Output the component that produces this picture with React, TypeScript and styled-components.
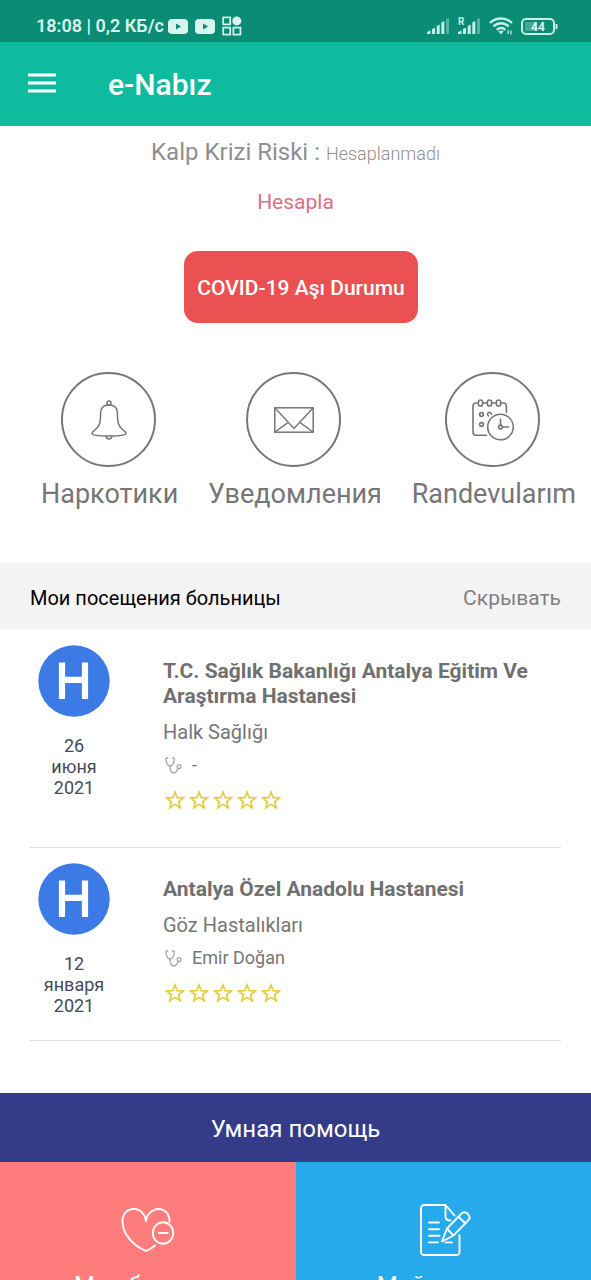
import React from "react";
import styled, { createGlobalStyle } from "styled-components";

const GlobalStyle = createGlobalStyle`
  *, *::before, *::after { box-sizing: border-box; }
  body { margin: 0; background: #ffffff; font-family: Roboto, "Noto Sans", sans-serif; }
  button { font: inherit; border: 0; padding: 0; background: none; cursor: pointer; }
  h1, h2, h3, p, ul { margin: 0; padding: 0; }
  ul { list-style: none; }
  a { color: inherit; text-decoration: none; }
  svg { display: block; flex: none; }
`;

const Screen = styled.div`
  display: flex;
  flex-direction: column;
  height: 100vh;
  overflow: hidden;
`;

const StatusBar = styled.div`
  display: flex;
  align-items: center;
  justify-content: space-between;
  flex: none;
  height: 42px;
  padding: 10px 33px 0 36px;
  background: #0a8d74;
  color: #d9f5ee;
  font-size: 18px;
  font-weight: 600;
  line-height: 32px;
`;

const StatusGroup = styled.div<{ $gap: number }>`
  display: flex;
  align-items: center;
  gap: ${(p) => p.$gap}px;
`;

const AppBar = styled.header`
  display: flex;
  align-items: center;
  flex: none;
  gap: 52px;
  height: 84px;
  padding: 2px 28px 0;
  background: #0fbb9e;
  color: #ffffff;
`;

const MenuButton = styled.button`
  color: #ffffff;
  padding-bottom: 4px;
`;

const AppTitle = styled.h1`
  font-size: 30px;
  font-weight: 500;
  line-height: 36px;
`;

const Content = styled.main`
  flex: 1;
  min-height: 0;
  overflow-y: auto;
  scrollbar-width: none;
`;

const RiskPanel = styled.section`
  display: flex;
  flex-direction: column;
  align-items: center;
  padding-top: 8px;
`;

const RiskLine = styled.p`
  color: #8f8f8f;
  font-size: 24px;
  line-height: 36px;
`;

const RiskValue = styled.span`
  font-size: 18px;
  font-weight: 300;
`;

const CalculateButton = styled.button`
  margin-top: 15px;
  color: #dd6f86;
  font-size: 21px;
  line-height: 30px;
`;

const CovidButton = styled.button`
  height: 72px;
  margin: 34px 0 0 11px;
  padding: 2px 13px 0;
  border-radius: 14px;
  background: #eb5152;
  color: #ffffff;
  font-size: 21px;
  font-weight: 500;
`;

const Shortcuts = styled.nav`
  display: flex;
  justify-content: space-between;
  padding: 49px 15px 51px 41px;
`;

const Shortcut = styled.a`
  display: flex;
  flex-direction: column;
  align-items: center;
  gap: 9px;
  color: #767676;
  font-size: 27px;
  line-height: 36px;
`;

const ShortcutCircle = styled.span`
  display: flex;
  align-items: center;
  justify-content: center;
  width: 95px;
  height: 95px;
  margin-right: 2px;
  border: 2px solid #767676;
  border-radius: 50%;
`;

const SectionBar = styled.div`
  display: flex;
  align-items: center;
  justify-content: space-between;
  height: 67px;
  padding: 2px 30px 0;
  background: #f4f4f4;
`;

const SectionTitle = styled.h2`
  color: #000000;
  font-size: 20px;
  font-weight: 400;
`;

const HideButton = styled.button`
  color: #808080;
  font-size: 21px;
`;

const VisitList = styled.ul`
  padding: 0 30px 52px;
`;

const Visit = styled.li`
  display: flex;
  gap: 45px;
  padding-top: 15px;
  border-bottom: 1px solid #dcdcdc;
`;

const VisitWhen = styled.div`
  display: flex;
  flex-direction: column;
  align-items: center;
  flex: none;
  gap: 18px;
  width: 88px;
`;

const VisitDate = styled.p`
  width: 64px;
  color: #454a55;
  font-size: 18px;
  line-height: 21px;
  text-align: center;
`;

const VisitInfo = styled.div`
  flex: 1;
  min-width: 0;
  padding: 14px 0 37px;
`;

const HospitalName = styled.h3`
  color: #707070;
  font-size: 21px;
  font-weight: 700;
  line-height: 25px;
`;

const Department = styled.p`
  margin-top: 11px;
  color: #767676;
  font-size: 20px;
  line-height: 24px;
`;

const Doctor = styled.p`
  display: flex;
  align-items: center;
  gap: 10px;
  margin-top: 9px;
  padding-left: 2px;
  color: #767676;
  font-size: 18px;
  line-height: 24px;
`;

const Rating = styled.div`
  display: flex;
  gap: 4px;
  margin-top: 13px;
  padding-left: 2px;
`;

const SmartHelp = styled.button`
  display: block;
  width: 100%;
  height: 69px;
  padding-top: 2px;
  background: #343c8a;
  color: #ffffff;
  font-size: 24px;
`;

const Tiles = styled.nav`
  display: grid;
  grid-template-columns: 1fr 1fr;
`;

const Tile = styled.a<{ $color: string }>`
  display: flex;
  flex-direction: column;
  align-items: center;
  gap: 9px;
  height: 200px;
  padding-top: 40px;
  background: ${(p) => p.$color};
  color: #ffffff;
  font-size: 24px;
  line-height: 36px;
`;

const VideoIcon = () => (
  <svg width="20" height="15" viewBox="0 0 20 15" aria-hidden="true">
    <rect width="20" height="15" rx="4" fill="#d9f5ee" />
    <path d="M8 4.5 L13 7.5 L8 10.5 Z" fill="#0a8d74" />
  </svg>
);

const AppsIcon = () => (
  <svg width="20" height="20" viewBox="0 0 20 20" fill="none" stroke="#d9f5ee" strokeWidth="1.7" aria-hidden="true">
    <rect x="1.2" y="1.4" width="7" height="7" />
    <rect x="1.2" y="11.6" width="7" height="7" />
    <rect x="11.4" y="11.6" width="7" height="7" />
    <circle cx="14.8" cy="4.9" r="4.5" fill="#d9f5ee" stroke="none" />
  </svg>
);

const SignalIcon = ({ roaming = false }: { roaming?: boolean }) => (
  <svg width="23" height="18" viewBox="0 0 23 18" fill="#c4f0e6" aria-hidden="true">
    <path d="M0 17 V15 L3.5 13.5 V17 Z M5 17 V12 L8 10.8 V17 Z M9.7 17 V9 L12.7 7.6 V17 Z M14.3 17 V5.5 L17.3 4 V17 Z" />
    <path d="M19 17 V2.2 L22 1 V17 Z" opacity="0.4" />
    {roaming && (
      <>
        <rect x="0" y="0" width="8" height="9" fill="#0a8d74" />
        <text x="0" y="8" fontSize="10" fontWeight="700" fontFamily="Roboto, sans-serif">
          R
        </text>
      </>
    )}
  </svg>
);

const WifiIcon = () => (
  <svg width="24" height="18" viewBox="0 0 24 18" fill="none" stroke="#c4f0e6" strokeWidth="2.4" aria-hidden="true">
    <path d="M1 6 C7 0 17 0 23 6" />
    <path d="M4.4 9.4 C8.6 5.2 15.4 5.2 19.6 9.4" />
    <path d="M7.8 12.8 C10.2 10.4 13.8 10.4 16.2 12.8" />
    <path d="M9.4 14.4 C11 13.2 13 13.2 14.6 14.4 L12 17.2 Z" fill="#c4f0e6" stroke="none" />
    <path d="M19.2 13 V17 M22 13.5 V17.5" strokeWidth="1.2" />
  </svg>
);

const BatteryIcon = () => (
  <svg width="37" height="17" viewBox="0 0 37 17" aria-hidden="true">
    <rect x="1" y="1" width="32" height="15" rx="4" fill="none" stroke="#c4f0e6" strokeWidth="2" />
    <rect x="4" y="4" width="12" height="9" rx="1" fill="#c4f0e6" opacity="0.3" />
    <rect x="34.5" y="6" width="2" height="5" fill="#c4f0e6" />
    <text x="17" y="12.5" textAnchor="middle" fill="#e4fbf5" fontSize="12" fontWeight="700" fontFamily="Roboto, sans-serif">
      44
    </text>
  </svg>
);

const MenuIcon = () => (
  <svg width="28" height="20" viewBox="0 0 28 20" stroke="currentColor" strokeWidth="2.8" aria-hidden="true">
    <path d="M0 2 H28 M0 10 H28 M0 18 H28" />
  </svg>
);

const BellIcon = () => (
  <svg width="36" height="40" viewBox="0 0 36 40" fill="none" stroke="currentColor" strokeWidth="1.5" aria-hidden="true">
    <circle cx="18" cy="3" r="2" />
    <path d="M18 5 C12 5 9.6 8 9.6 13 C9.6 23 8.5 26 4.5 29.5 C2.2 31.5 1 32 1 33.5 C1 35.5 9 36 18 36 C27 36 35 35.5 35 33.5 C35 32 33.8 31.5 31.5 29.5 C27.5 26 26.4 23 26.4 13 C26.4 8 24 5 18 5 Z" />
    <path d="M15.2 36.2 C15.2 39.8 20.8 39.8 20.8 36.2" />
  </svg>
);

const EnvelopeIcon = () => (
  <svg width="40" height="26" viewBox="0 0 40 26" fill="none" stroke="currentColor" strokeWidth="1.5" aria-hidden="true">
    <rect x="0.8" y="0.8" width="38.4" height="24.4" />
    <path d="M1 1 L20 21.5 L39 1 M1 25 L13.5 15.8 M39 25 L26.5 15.8" />
  </svg>
);

const CalendarIcon = () => (
  <svg width="42" height="42" viewBox="0 0 42 42" fill="none" stroke="currentColor" strokeWidth="1.6" strokeLinecap="round" aria-hidden="true">
    <path d="M6 4 H4 C2 4 1 5 1 7 V33 C1 35 2 36.2 4 36.2 H14.5 M11 4 H15 M20 4 H24 M29 4 H31.5 C33.5 4 34.4 5 34.4 7 V13.5" />
    <rect x="6.4" y="1" width="4.2" height="6" rx="2.1" />
    <rect x="15.4" y="1" width="4.2" height="6" rx="2.1" />
    <rect x="24.4" y="1" width="4.2" height="6" rx="2.1" />
    <circle cx="9.5" cy="15.5" r="1.9" />
    <path d="M16.4 16.8 A1.9 1.9 0 1 1 19.4 15.2" />
    <circle cx="9.5" cy="25.5" r="1.9" />
    <circle cx="28.5" cy="28" r="12.8" />
    <circle cx="28.5" cy="28" r="1.9" />
    <path d="M28.5 20 V26 M30.5 28 H36.5" />
  </svg>
);

const HospitalIcon = () => (
  <svg width="72" height="72" viewBox="0 0 72 72" aria-hidden="true">
    <circle cx="36" cy="36" r="35.7" fill="#3c7be6" />
    <path d="M24 17.5 V54 M47 17.5 V54 M24 34.8 H47" stroke="#ffffff" strokeWidth="6.2" />
  </svg>
);

const StethoscopeIcon = () => (
  <svg width="17" height="17" viewBox="0 0 17 17" fill="none" stroke="#a3a3a3" strokeWidth="1.3" strokeLinecap="round" aria-hidden="true">
    <path d="M2.8 1 H1.8 C0.6 1 0.8 2.2 1 3 C1.6 6.5 3 9 5 9 C7 9 8.6 6.5 9.2 3 C9.4 2 9.4 1 8.2 1 H7.4" />
    <path d="M5 9 C5 13 6 16 9 16 C12.4 16 11.2 13 13.4 11.6" />
    <circle cx="14.1" cy="9.6" r="1.9" />
  </svg>
);

const StarIcon = () => (
  <svg width="20" height="20" viewBox="0 0 20 20" fill="none" stroke="#e6cd3c" strokeWidth="1.7" aria-hidden="true">
    <path d="M10 2 L12.2 7.7 L18.3 8 L13.6 11.8 L15.2 17.8 L10 14.4 L4.8 17.8 L6.4 11.8 L1.7 8 L7.8 7.7 Z" />
  </svg>
);

const HeartMinusIcon = () => (
  <svg width="54" height="56" viewBox="0 0 54 56" fill="none" stroke="currentColor" strokeWidth="1.9" strokeLinecap="round" strokeLinejoin="round" aria-hidden="true">
    <path d="M48.5 19.5 C48.5 12 44 7 37.5 7 C31 7 26 12 25 19 C24 12 19.5 7 13 7 C6 7 1.5 12 1.5 19.5 C1.5 32 12 43.5 25 49 C28.5 47.5 31.5 45.8 34 43.5" />
    <ellipse cx="42" cy="31" rx="10.2" ry="10.8" />
    <path d="M37.8 31 H46.6" />
  </svg>
);

const PrescriptionIcon = () => (
  <svg width="55" height="56" viewBox="-3 0 55 56" fill="none" stroke="currentColor" strokeWidth="1.9" strokeLinecap="round" strokeLinejoin="round" aria-hidden="true">
    <path d="M40.5 33 V49.5 C40.5 51.8 39.4 53 37 53 H5.5 C3.2 53 2 51.8 2 49.5 V6.5 C2 4.2 3.2 3 5.5 3 H26.5 L35.5 13.5 M26.5 3 V14.5 C26.5 17.3 28 18.5 31.5 18.5" />
    <path d="M10 20.5 H20 M10 27.2 H20 M10 33.8 H20.5 M10 40.4 H19 M26.5 40.4 H33" />
    <path d="M23 39.5 L28 26.5 L42.5 11.5 C46 8 53 13.5 49.5 18 L34.5 33.5 Z M28 26.5 L34.5 33.5 M39.5 14.8 L46.2 21.2" />
  </svg>
);

type VisitRecord = { date: string; hospital: string; department: string; doctor: string };

const visits: VisitRecord[] = [
  {
    date: "26 июня 2021",
    hospital: "T.C. Sağlık Bakanlığı Antalya Eğitim Ve Araştırma Hastanesi",
    department: "Halk Sağlığı",
    doctor: "-",
  },
  {
    date: "12 января 2021",
    hospital: "Antalya Özel Anadolu Hastanesi",
    department: "Göz Hastalıkları",
    doctor: "Emir Doğan",
  },
];

export default function App() {
  return (
    <Screen>
      <GlobalStyle />
      <StatusBar>
        <StatusGroup $gap={7}>
          <StatusGroup $gap={4}>
            <span>18:08 | 0,2 КБ/с</span>
            <VideoIcon />
          </StatusGroup>
          <VideoIcon />
          <AppsIcon />
        </StatusGroup>
        <StatusGroup $gap={8}>
          <SignalIcon />
          <SignalIcon roaming />
          <WifiIcon />
          <BatteryIcon />
        </StatusGroup>
      </StatusBar>
      <AppBar>
        <MenuButton aria-label="Menü">
          <MenuIcon />
        </MenuButton>
        <AppTitle>e-Nabız</AppTitle>
      </AppBar>
      <Content>
        <RiskPanel>
          <RiskLine>
            Kalp Krizi Riski : <RiskValue>Hesaplanmadı</RiskValue>
          </RiskLine>
          <CalculateButton>Hesapla</CalculateButton>
          <CovidButton>COVID-19 Aşı Durumu</CovidButton>
        </RiskPanel>
        <Shortcuts>
          <Shortcut href="#alerts">
            <ShortcutCircle>
              <BellIcon />
            </ShortcutCircle>
            Наркотики
          </Shortcut>
          <Shortcut href="#messages">
            <ShortcutCircle>
              <EnvelopeIcon />
            </ShortcutCircle>
            Уведомления
          </Shortcut>
          <Shortcut href="#appointments">
            <ShortcutCircle>
              <CalendarIcon />
            </ShortcutCircle>
            Randevularım
          </Shortcut>
        </Shortcuts>
        <section>
          <SectionBar>
            <SectionTitle>Мои посещения больницы</SectionTitle>
            <HideButton>Скрывать</HideButton>
          </SectionBar>
          <VisitList>
            {visits.map((visit) => (
              <Visit key={visit.date}>
                <VisitWhen>
                  <HospitalIcon />
                  <VisitDate>{visit.date}</VisitDate>
                </VisitWhen>
                <VisitInfo>
                  <HospitalName>{visit.hospital}</HospitalName>
                  <Department>{visit.department}</Department>
                  <Doctor>
                    <StethoscopeIcon />
                    {visit.doctor}
                  </Doctor>
                  <Rating>
                    {[1, 2, 3, 4, 5].map((n) => (
                      <StarIcon key={n} />
                    ))}
                  </Rating>
                </VisitInfo>
              </Visit>
            ))}
          </VisitList>
        </section>
        <SmartHelp>Умная помощь</SmartHelp>
        <Tiles>
          <Tile href="#diseases" $color="#ff7c7c">
            <HeartMinusIcon />
            Мои болезни
          </Tile>
          <Tile href="#prescriptions" $color="#27aaeb">
            <PrescriptionIcon />
            Мой рецепт
          </Tile>
        </Tiles>
      </Content>
    </Screen>
  );
}
